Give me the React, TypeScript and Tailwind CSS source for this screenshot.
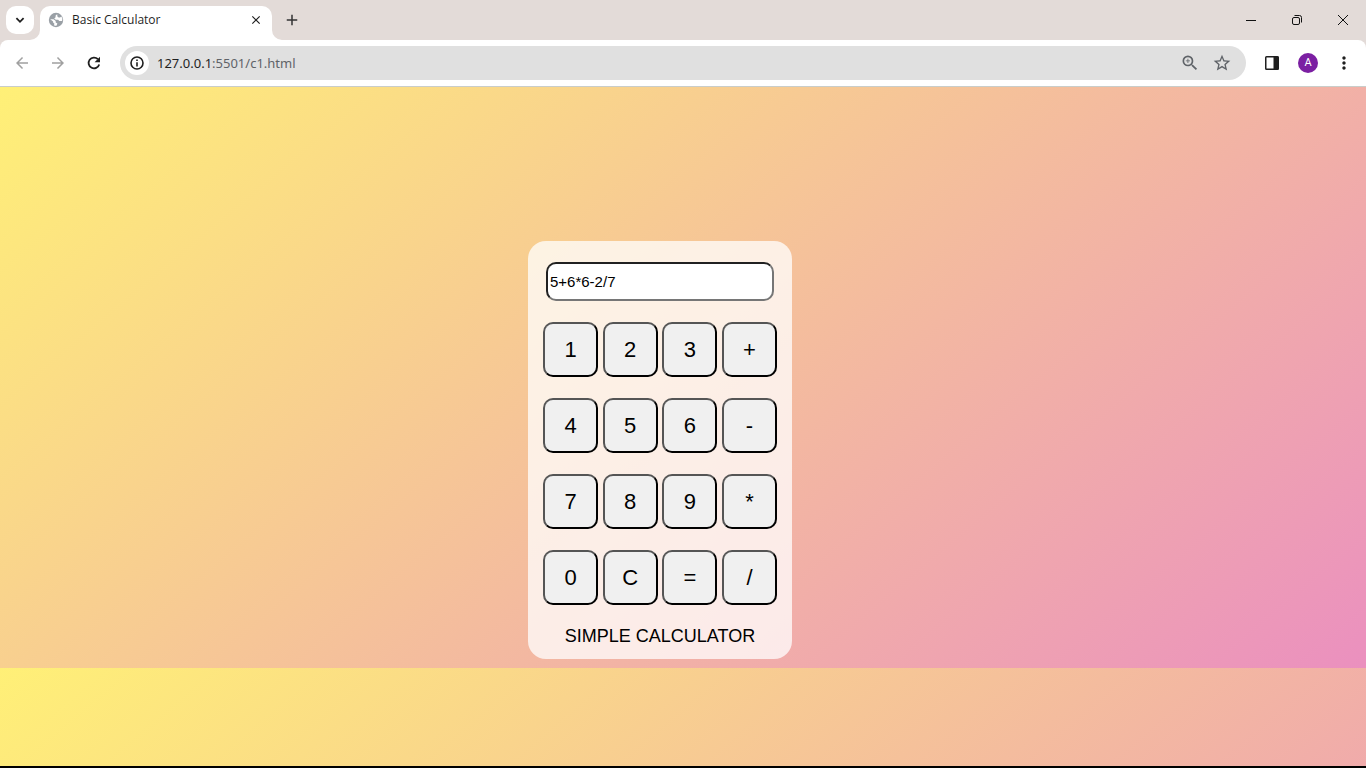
import { useState } from "react";
import type { ReactNode } from "react";
import { MdAdd, MdArrowBack, MdArrowForward, MdClose, MdMoreVert, MdStarBorder, MdZoomIn } from "react-icons/md";

const KEYS = ["1", "2", "3", "+", "4", "5", "6", "-", "7", "8", "9", "*", "0", "C", "=", "/"];

function evaluate(source: string): string {
  const tokens = source.match(/\d+(\.\d+)?|[-+*/]/g);
  if (!tokens) return "";
  const terms: number[] = [];
  let operator = "+";
  for (const token of tokens) {
    if (/^[-+*/]$/.test(token)) {
      operator = token;
      continue;
    }
    const value = Number(token);
    if (operator === "+") terms.push(value);
    else if (operator === "-") terms.push(-value);
    else {
      const last = terms.pop() ?? 0;
      terms.push(operator === "*" ? last * value : last / value);
    }
  }
  return String(terms.reduce((sum, term) => sum + term, 0));
}

function GlobeIcon() {
  return (
    <svg viewBox="0 0 16 16" className="size-4 shrink-0">
      <circle cx="8" cy="8" r="7.2" fill="#9aa0a6" />
      <path
        d="M9.2 2.3L7.6 3.6v1.6L6.2 6.4l1.6 1.4h2.4l1 1.2h2.9a6.2 6.2 0 0 0-.6-4.6L12 5.6h-1.4L9.4 4.4z"
        fill="#fff"
      />
      <path d="M2.2 7.2h3.3l2.2 1.9v1.5l1.7.9-.9 2.3a6 6 0 0 1-2.6-.5l.6-1.6-1.4-1.2V9.4z" fill="#fff" />
    </svg>
  );
}

function WindowButton({ label, children }: { label: string; children: ReactNode }) {
  return (
    <button type="button" aria-label={label} className="flex h-10 w-[46px] items-center justify-center">
      <svg viewBox="0 0 12 12" className="size-3" fill="none" stroke="#111" strokeWidth="1">
        {children}
      </svg>
    </button>
  );
}

function TabStrip() {
  return (
    <div className="flex h-10 items-start">
      <button
        type="button"
        aria-label="Search tabs"
        className="ml-1.5 mt-1.5 flex size-7 items-center justify-center rounded-[10px] bg-white"
      >
        <svg viewBox="0 0 10 10" className="size-2.5" fill="none" stroke="#1f1f1f" strokeWidth="1.8">
          <path d="M1.4 3.2L5 6.8l3.6-3.6" />
        </svg>
      </button>
      <div className="relative ml-1.5 mt-1.5 flex h-[34px] w-[232px] items-start gap-2 rounded-t-[10px] bg-white px-2">
        <svg viewBox="0 0 10 10" className="absolute -left-2.5 bottom-0 size-2.5" fill="#fff">
          <path d="M10 0v10H0A10 10 0 0 0 10 0z" />
        </svg>
        <svg viewBox="0 0 10 10" className="absolute -right-2.5 bottom-0 size-2.5" fill="#fff">
          <path d="M0 0v10h10A10 10 0 0 1 0 0z" />
        </svg>
        <div className="flex h-7 min-w-0 grow items-center gap-2">
          <GlobeIcon />
          <span className="grow truncate font-['Open_Sans','Noto_Sans',sans-serif] text-xs text-[#1f1f1f]">
            Basic Calculator
          </span>
          <button type="button" aria-label="Close tab" className="flex size-4 items-center justify-center">
            <MdClose className="size-3.5 text-[#1f1f1f]" />
          </button>
        </div>
      </div>
      <button
        type="button"
        aria-label="New tab"
        className="ml-1.5 mt-1.5 flex size-7 items-center justify-center text-[#333]"
      >
        <MdAdd className="size-[18px]" />
      </button>
      <div className="ml-auto flex">
        <WindowButton label="Minimize">
          <path d="M1 6.5h10" />
        </WindowButton>
        <WindowButton label="Restore">
          <rect x="1.5" y="3.5" width="7" height="7" rx="1.5" />
          <path d="M3.5 1.5h5a2 2 0 0 1 2 2v5" />
        </WindowButton>
        <WindowButton label="Close">
          <path d="M1 1l10 10M11 1L1 11" />
        </WindowButton>
      </div>
    </div>
  );
}

function ToolButton({ label, children }: { label: string; children: ReactNode }) {
  return (
    <button type="button" aria-label={label} className="flex size-9 shrink-0 items-center justify-center text-[#1f1f1f]">
      {children}
    </button>
  );
}

function Toolbar() {
  return (
    <div className="flex h-[47px] items-center rounded-t-lg border-b border-[#c9cdca] bg-white px-1">
      <ToolButton label="Back">
        <MdArrowBack className="size-[18px] text-[#a0a0a0]" />
      </ToolButton>
      <ToolButton label="Forward">
        <MdArrowForward className="size-[18px] text-[#a0a0a0]" />
      </ToolButton>
      <ToolButton label="Reload">
        <svg viewBox="0 0 14 14" className="size-3.5">
          <path d="M12.2 8.4A5.4 5.4 0 1 1 10.9 3.2" fill="none" stroke="#1f1f1f" strokeWidth="1.8" />
          <path d="M13 0.8v5.4H7.6z" fill="#1f1f1f" />
        </svg>
      </ToolButton>
      <div className="mx-2 flex h-[34px] grow items-center gap-2 rounded-full bg-[#e0e0e0] px-[5px]">
        <button
          type="button"
          aria-label="View site information"
          className="flex size-6 items-center justify-center rounded-full bg-white"
        >
          <svg viewBox="0 0 14 14" className="size-3.5">
            <circle cx="7" cy="7" r="6" fill="none" stroke="#1f1f1f" strokeWidth="1.6" />
            <path d="M6.2 6.2h1.6v4.2H6.2zM6.2 3.5h1.6v1.6H6.2z" fill="#1f1f1f" />
          </svg>
        </button>
        <a href="http://127.0.0.1:5501/c1.html" className="grow text-[13px] leading-5 text-[#5f6368]">
          <span className="text-[#1f1f1f]">127.0.0.1</span>:5501/c1.html
        </a>
        <div className="flex gap-3 pr-[9px] text-[#5f6368]">
          <button type="button" aria-label="Zoom" className="flex size-5 items-center justify-center">
            <MdZoomIn className="size-5" />
          </button>
          <button type="button" aria-label="Bookmark this tab" className="flex size-5 items-center justify-center">
            <MdStarBorder className="size-5" />
          </button>
        </div>
      </div>
      <ToolButton label="Side panel">
        <svg viewBox="0 0 14 14" className="size-3.5">
          <rect x="0.75" y="0.75" width="12.5" height="12.5" rx="0.75" fill="none" stroke="#1f1f1f" strokeWidth="1.5" />
          <path d="M8.5 0.5h5v13h-5z" fill="#1f1f1f" />
        </svg>
      </ToolButton>
      <ToolButton label="Profile">
        <span className="flex size-5 items-center justify-center rounded-full bg-[#7b1fa2] font-['Roboto',sans-serif] text-[11px] text-white">
          A
        </span>
      </ToolButton>
      <ToolButton label="Menu">
        <MdMoreVert className="size-5" />
      </ToolButton>
    </div>
  );
}

function Calculator() {
  const [expression, setExpression] = useState("5+6*6-2/7");

  const press = (key: string) => {
    if (key === "C") setExpression("");
    else if (key === "=") setExpression(evaluate(expression));
    else setExpression(expression + key);
  };

  return (
    <section
      aria-labelledby="calculator-name"
      className="flex w-[264px] flex-col gap-[21px] rounded-[18px] bg-white/75 px-[15px] pb-[13px] pt-[21px] font-['Liberation_Sans',sans-serif] text-black"
    >
      <input
        type="text"
        aria-label="Expression"
        value={expression}
        onChange={(event) => setExpression(event.target.value)}
        className="mx-[3px] h-[39px] rounded-[10px] border-2 border-b-[#767676] border-l-[#212121] border-r-[#767676] border-t-[#212121] bg-white px-0.5 text-[15px] outline-none"
      />
      <div className="grid grid-cols-[repeat(4,55px)] justify-between gap-y-[21px]">
        {KEYS.map((key) => (
          <button
            key={key}
            type="button"
            onClick={() => press(key)}
            className="h-[55px] rounded-[10px] border-2 border-b-black border-l-[#555] border-r-black border-t-[#555] bg-[#f0f0f0] text-[22px]"
          >
            {key}
          </button>
        ))}
      </div>
      <h1 id="calculator-name" className="text-center text-lg leading-5">
        SIMPLE CALCULATOR
      </h1>
    </section>
  );
}

export default function App() {
  return (
    <div className="flex min-h-screen flex-col border-b-2 border-black font-['Noto_Sans',sans-serif]">
      <header className="bg-[#e3dbd8]">
        <TabStrip />
        <Toolbar />
      </header>
      <main className="flex grow items-start justify-center bg-[linear-gradient(140deg,#fff077,#ea8dc1_103%)] bg-[length:100%_581px] pr-[46px] pt-[154px]">
        <Calculator />
      </main>
    </div>
  );
}
